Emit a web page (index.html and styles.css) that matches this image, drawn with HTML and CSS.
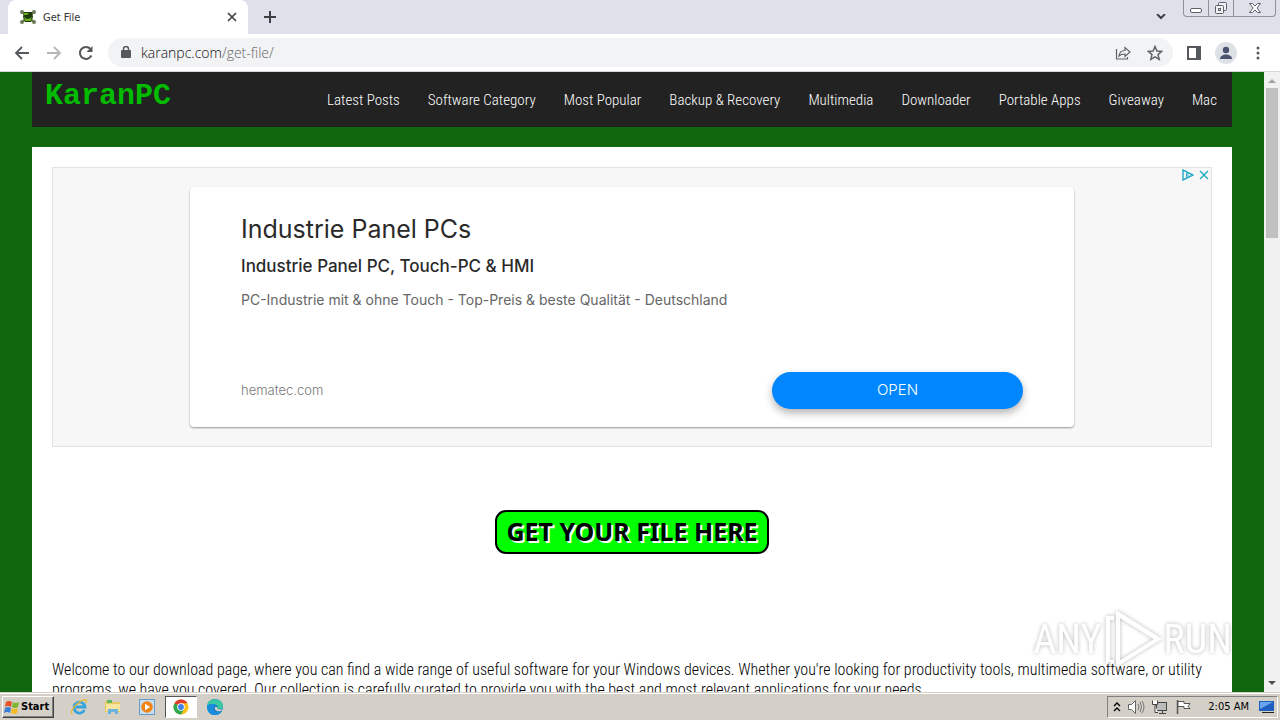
FILE: index.html
```html
<!DOCTYPE html>
<html lang="en">
<head>
    <meta charset="UTF-8">
    <meta name="viewport" content="width=device-width, initial-scale=1.0">
    <title>Get File</title>
    <link rel="stylesheet" href="styles.css">
</head>
<body>

<!-- Browser tabs -->
<div class="tab-strip">
    <div class="tab">
        <svg class="favicon" viewBox="0 0 16 16">
            <path d="M2 3l12 10M14 3L2 13" stroke="#6d8a4a" stroke-width="2.4"/>
            <g fill="#6d7a5a"><circle cx="2" cy="3" r="2"/><circle cx="14" cy="3" r="2"/><circle cx="2" cy="13" r="2"/><circle cx="14" cy="13" r="2"/></g>
            <path d="M4 3h8l1 5-2 5H5L3 8z" fill="#1d3a08"/>
            <path d="M4 4h5L7 6H4zM4 8l3 2 4-1 1-2-1 5H5z" fill="#6fae25"/>
        </svg>
        <span class="tab-title">Get File</span>
        <button class="icon-btn tab-close" aria-label="Close tab">
            <svg width="10" height="10" viewBox="0 0 10 10"><path d="M1 1l8 8M9 1L1 9" stroke="#3c4043" stroke-width="1.7"/></svg>
        </button>
    </div>
    <button class="icon-btn new-tab" aria-label="New tab">
        <svg width="12" height="12" viewBox="0 0 12 12"><path d="M6 0v12M0 6h12" stroke="#3c4043" stroke-width="2"/></svg>
    </button>
    <button class="icon-btn tab-search" aria-label="Search tabs">
        <svg width="10" height="6" viewBox="0 0 10 6"><path d="M1 0l4 4 4-4" fill="none" stroke="#3c4043" stroke-width="2"/></svg>
    </button>
    <div class="window-buttons">
        <button aria-label="Minimize">
            <svg width="14" height="16" viewBox="0 0 14 16"><rect x="1.500" y="8.500" width="11" height="4" rx="1.500" fill="#fff" stroke="#5c6068"/></svg>
        </button>
        <button aria-label="Restore">
            <svg width="14" height="16" viewBox="0 0 14 16" fill="#eef0f3" stroke="#5c6068"><rect x="4.500" y="2.500" width="8" height="8" rx="1"/><rect x="1.500" y="5.500" width="8" height="8" rx="1"/><rect x="4.500" y="8.500" width="2" height="2"/></svg>
        </button>
        <button class="win-close" aria-label="Close">
            <svg width="14" height="16" viewBox="0 0 14 16"><path d="M1.500 3.500h3L7 6l2.500-2.500h3L9 8l3.500 4.500h-3L7 10l-2.500 2.500h-3L5 8z" fill="#fff" stroke="#5c6068"/></svg>
        </button>
    </div>
</div>

<!-- Address bar -->
<div class="toolbar">
    <button class="icon-btn" aria-label="Back">
        <svg width="16" height="16" viewBox="0 0 16 16"><path d="M15 8H2M8 2L2 8l6 6" fill="none" stroke="#55585c" stroke-width="1.8"/></svg>
    </button>
    <button class="icon-btn" aria-label="Forward">
        <svg width="16" height="16" viewBox="0 0 16 16"><path d="M1 8h13M8 2l6 6-6 6" fill="none" stroke="#b5b7ba" stroke-width="1.8"/></svg>
    </button>
    <button class="icon-btn" aria-label="Reload">
        <svg width="16" height="16" viewBox="0 0 16 16"><path d="M13.400 10.500A6 6 0 1 1 12.500 4" fill="none" stroke="#55585c" stroke-width="2"/><path d="M14.500 1v6h-6z" fill="#55585c"/></svg>
    </button>
    <div class="omnibox">
        <svg width="10" height="13" viewBox="0 0 10 13"><rect y="4" width="10" height="8" rx="1" fill="#55585c"/><path d="M2.500 5V3a2.500 2.500 0 0 1 5 0v2" fill="none" stroke="#55585c" stroke-width="1.500"/></svg>
        <div class="url">karanpc.com<span>/get-file/</span></div>
        <button class="icon-btn" aria-label="Share">
            <svg width="16" height="16" viewBox="0 0 16 16" fill="none" stroke="#5f6368" stroke-width="1.200"><path d="M1.500 4v10h11v-2"/><path d="M4 11c.5-4 3-5.500 6-5.500V2.500l5 4.500-5 4.500V9C7.500 9 5.500 9.500 4 11z"/></svg>
        </button>
        <button class="icon-btn" aria-label="Bookmark">
            <svg width="16" height="16" viewBox="0 0 16 16"><path d="M8 1.500l1.900 4.500 4.800.4-3.700 3.200 1.200 4.800L8 11.800l-4.200 2.600L5 9.600 1.300 6.400l4.800-.4z" fill="none" stroke="#5f6368" stroke-width="1.500"/></svg>
        </button>
    </div>
    <button class="icon-btn" aria-label="Side panel">
        <svg width="14" height="14" viewBox="0 0 14 14"><rect x="1" y="1" width="12" height="12" fill="#fff" stroke="#55585c" stroke-width="2"/><path d="M9 1h4v12H9z" fill="#55585c"/></svg>
    </button>
    <button class="icon-btn profile" aria-label="Profile">
        <svg width="22" height="22" viewBox="0 0 22 22"><circle cx="11" cy="11" r="11" fill="#dee1e6"/><circle cx="11" cy="8" r="3.200" fill="#4a5470"/><path d="M5 17c0-6 12-6 12 0z" fill="#4a5470"/></svg>
    </button>
    <button class="icon-btn" aria-label="Menu">
        <svg width="10" height="14" viewBox="0 0 10 14" fill="#55585c"><circle cx="5" cy="2" r="1.500"/><circle cx="5" cy="7" r="1.500"/><circle cx="5" cy="12" r="1.500"/></svg>
    </button>
</div>

<div class="viewport">
    <div class="page">
        <div class="site">
            <header class="site-header">
                <a class="logo" href="#">KaranPC</a>
                <nav>
                    <a href="#">Latest Posts</a>
                    <a href="#">Software Category</a>
                    <a href="#">Most Popular</a>
                    <a href="#">Backup &amp; Recovery</a>
                    <a href="#">Multimedia</a>
                    <a href="#">Downloader</a>
                    <a href="#">Portable Apps</a>
                    <a href="#">Giveaway</a>
                    <a href="#">Mac</a>
                </nav>
            </header>
            <main class="content">
                <div class="ad">
                    <div class="ad-choices">
                        <svg width="12" height="12" viewBox="0 0 12 12" fill="none" stroke="#1fa9c4"><path d="M1 1v10l10-5z" stroke-width="1.400"/><path d="M4.500 4v4l2-2z"/></svg>
                        <svg width="12" height="12" viewBox="0 0 12 12"><path d="M2 2l8 8M10 2l-8 8" stroke="#1fa9c4" stroke-width="1.400"/></svg>
                    </div>
                    <div class="ad-card">
                        <h2>Industrie Panel PCs</h2>
                        <h3>Industrie Panel PC, Touch-PC &amp; HMI</h3>
                        <p>PC-Industrie mit &amp; ohne Touch - Top-Preis &amp; beste Qualität - Deutschland</p>
                        <div class="ad-footer">
                            <span class="ad-domain">hematec.com</span>
                            <button class="ad-open">OPEN</button>
                        </div>
                    </div>
                </div>
                <button class="get-file">GET YOUR FILE HERE</button>
                <p class="intro">Welcome to our download page, where you can find a wide range of useful software for your Windows devices. Whether you're looking for productivity tools, multimedia software, or utility programs, we have you covered. Our collection is carefully curated to provide you with the best and most relevant applications for your needs.</p>
            </main>
        </div>
    </div>
    <div class="scrollbar">
        <span class="arrow up"></span>
        <div class="thumb"></div>
        <span class="arrow down"></span>
    </div>
    <div class="watermark">
        <span>ANY</span>
        <svg width="58" height="60" viewBox="0 0 58 60" fill="none" stroke="#fff" stroke-width="4"><path d="M10 8H4v44h6"/><path d="M14 4v50l40-25z"/><path d="M14 4l40 25" stroke-width="5"/></svg>
        <span>RUN</span>
    </div>
</div>

<!-- Windows taskbar -->
<div class="taskbar">
    <button class="start">
        <svg width="16" height="16" viewBox="0 0 16 16"><path d="M2 3q3-2 6 0L7 8Q4 6 1 8z" fill="#e8502a"/><path d="M9 3q3 2 6 0l-1 5q-3 2-6 0z" fill="#7cb82f"/><path d="M1 9q3-2 6 0l-1 5q-3-2-6 0z" fill="#3a7fd5"/><path d="M8 9q3 2 6 0l-1 5q-3 2-6 0z" fill="#f5b921"/></svg>
        Start
    </button>
    <div class="quick-launch">
        <button aria-label="Internet Explorer">
            <svg width="18" height="18" viewBox="0 0 18 18" fill="none"><path d="M14.500 12A5.500 5.500 0 1 1 15 9H5" stroke="#36a3dc" stroke-width="2.800"/><path d="M2 16C-1 12 12 0 16 2c1 .6.500 2-.3 3" stroke="#e3b93b" stroke-width="1.400"/></svg>
        </button>
        <button aria-label="Explorer">
            <svg width="18" height="18" viewBox="0 0 18 18"><path d="M1 3h6l1 1h8v10H1z" fill="#e9c963"/><path d="M3 2h5v3H3z" fill="#5cb85c"/><path d="M2 6h14v7H2z" fill="#f7e49d"/><path d="M4 16v-5h10v5h-3v-2H7v2z" fill="#6cb4dc"/></svg>
        </button>
        <button aria-label="Media Player">
            <svg width="18" height="18" viewBox="0 0 18 18"><rect x="1.500" y="1.500" width="15" height="15" fill="#c9def0" stroke="#659ac9"/><circle cx="9" cy="9" r="5.800" fill="#f28416"/><path d="M7 5.800v6.400L12 9z" fill="#fff"/></svg>
        </button>
        <button class="active" aria-label="Chrome">
            <svg width="16" height="16" viewBox="0 0 16 16"><circle cx="8" cy="8" r="7.500" fill="#fbc116"/><path d="M8 8L1.500 4.250A7.500 7.500 0 0 1 14.500 4.250H8z" fill="#e33b2e"/><path d="M1.500 4.250A7.500 7.500 0 0 0 8 15.500l3.200-5.600L8 8z" fill="#2da94f"/><circle cx="8" cy="8" r="3.800" fill="#fff"/><circle cx="8" cy="8" r="2.900" fill="#3f7fe8"/></svg>
        </button>
        <button aria-label="Edge">
            <svg width="18" height="18" viewBox="0 0 18 18"><circle cx="9" cy="9" r="8" fill="#1477c9"/><path d="M1 8C2-1 16-1 17 8c0 3-3 4-6 3 2-3-1-5-4-5-3 0-5 1-6 2z" fill="#3cc8a0"/><path d="M1 8c2-3 8-3 9 0-4 0-4 5 1 6 2 .4 4-.5 5-1-3 5-8 4-9 4C3 16 1 13 1 8z" fill="#1b8edb"/><path d="M9 9c-1 3 2 5 6 4l2-2c-2 1-6 1-6-2z" fill="#d6d2c8"/></svg>
        </button>
    </div>
    <div class="tray">
        <svg width="8" height="12" viewBox="0 0 8 12" fill="none" stroke="#000" stroke-width="1.400"><path d="M1 5l3-3 3 3M1 10l3-3 3 3"/></svg>
        <svg width="18" height="16" viewBox="0 0 18 16"><path d="M1.500 5.500h3l4-4v13l-4-4h-3z" fill="#fff" stroke="#666"/><path d="M11 5q2 3 0 6M13 3q3 5 0 10M15 2q4 6 0 12" fill="none" stroke="#777"/></svg>
        <svg width="18" height="16" viewBox="0 0 18 16" stroke="#444"><rect x="5.500" y="3.500" width="10" height="8" fill="#bbb"/><path d="M8 14.500h7M11.500 12v2"/><path d="M1.500 1.500v4h5v-4M4 6v7.500h3" fill="#fff"/></svg>
        <svg width="18" height="16" viewBox="0 0 18 16"><path d="M2.500 1v14" stroke="#555" stroke-width="1.500"/><path d="M3 2.500h6v2h6l-2 3 2 2H9v-2H3z" fill="#fff" stroke="#555"/></svg>
        <time>2:05 AM</time>
        <svg width="16" height="16" viewBox="0 0 16 16"><path d="M0 2h15v10H0z" fill="#1e5fc0"/><path d="M1 3h13L1 10z" fill="#68a7ed"/><path d="M3 13h12v1H3z" fill="#222"/></svg>
    </div>
</div>

</body>
</html>
```
FILE: styles.css
```css
* {
    box-sizing: border-box;
}
body {
    margin: 0;
    height: 100vh;
    display: flex;
    flex-direction: column;
    overflow: hidden;
    font-family: "Roboto Condensed", "Liberation Sans Narrow", "Liberation Sans", sans-serif;
    font-size: 16px;
    font-weight: 300;
    color: #000;
}
button {
    padding: 0;
    font-family: inherit;
}
svg {
    display: block;
    flex-shrink: 0;
}
.icon-btn {
    display: flex;
    align-items: center;
    justify-content: center;
    border: none;
    background: none;
}

/* Tab strip */
.tab-strip {
    display: flex;
    align-items: center;
    flex: 0 0 34px;
    padding-left: 8px;
    background-color: #dee1e9;
}
.tab {
    display: flex;
    align-items: center;
    gap: 7px;
    align-self: stretch;
    width: 240px;
    padding: 0 11px 0 12px;
    border-radius: 8px 8px 0 0;
    background-color: #fff;
}
.favicon {
    width: 16px;
    height: 16px;
}
.tab-title {
    flex: 1;
    font: 11px "DejaVu Sans Condensed", "Noto Sans", sans-serif;
    color: #333;
}
.new-tab {
    margin-left: 16px;
}
.tab-search {
    margin-left: auto;
    margin-right: 17px;
}
.window-buttons {
    display: flex;
    align-self: flex-start;
    height: 17px;
    margin-right: 4px;
    border: 1px solid #8d929b;
    border-top: none;
    border-radius: 0 0 4px 4px;
}
.window-buttons button {
    display: flex;
    justify-content: center;
    width: 25px;
    border: none;
    border-right: 1px solid #8d929b;
    background: none;
}
.window-buttons .win-close {
    width: 41px;
    border-right: none;
}

/* Toolbar */
.toolbar {
    display: flex;
    align-items: center;
    gap: 16px;
    flex: 0 0 38px;
    padding: 0 17px 0 14px;
    border-bottom: 1px solid #d5d8dc;
    background-color: #fff;
}
.omnibox {
    display: flex;
    align-items: center;
    gap: 16px;
    flex: 1;
    height: 29px;
    margin: 0 -2px;
    padding: 0 10px 0 13px;
    border-radius: 15px;
    background-color: #f1f3f4;
}
.profile {
    margin-left: -2px;
}
.url {
    flex: 1;
    margin-left: -6px;
    font: 300 14px "Open Sans", sans-serif;
    color: #111;
}
.url span {
    color: #666;
}

/* Web page */
.viewport {
    position: relative;
    display: flex;
    flex: 1;
    min-height: 0;
    background-color: #10670e;
}
.page {
    flex: 1;
    overflow: hidden;
}
.site {
    max-width: 1200px;
    margin: 0 auto;
}
.site-header {
    display: flex;
    height: 55px;
    padding: 0 15px 0 13px;
    justify-content: space-between;
    background-color: #222;
}
.logo {
    margin-top: 7px;
    font: bold 30px/34px "Liberation Mono", monospace;
    color: #0b0;
    text-decoration: none;
}
nav {
    display: flex;
    align-items: center;
    gap: 28px;
    font-size: 15px;
}
nav a {
    color: #fff;
    text-decoration: none;
}
.content {
    margin-top: 20px;
    padding: 20px;
    background-color: #fff;
}
.ad {
    position: relative;
    height: 280px;
    padding: 19px;
    border: 1px solid #e2e2e2;
    background-color: #f7f7f7;
}
.ad-choices {
    position: absolute;
    top: 1px;
    right: 1px;
    display: flex;
    gap: 4px;
}
.ad-card {
    display: flex;
    flex-direction: column;
    max-width: 884px;
    height: 240px;
    margin: 0 auto;
    padding: 26px 51px 18px;
    border-radius: 4px;
    background-color: #fff;
    box-shadow: 0 1px 2px rgba(0,0,0,0.4);
    font-family: Inter, sans-serif;
}
.ad-card h2 {
    margin: 0;
    font-size: 25px;
    font-weight: 400;
    line-height: 32px;
    color: #2a2a2a;
}
.ad-card h3 {
    margin: 9px 0 10px;
    font-size: 17px;
    font-weight: 500;
    line-height: 24px;
    color: #2a2a2a;
}
.ad-card p {
    margin: 0;
    font-size: 14px;
    font-weight: 400;
    line-height: 24px;
    color: #666;
}
.ad-footer {
    display: flex;
    align-items: center;
    justify-content: space-between;
    margin-top: auto;
}
.ad-domain {
    padding-bottom: 2px;
    font-size: 13px;
    color: #777;
}
.ad-open {
    width: 251px;
    height: 37px;
    padding-bottom: 2px;
    border: none;
    border-radius: 19px;
    background-color: #0087ff;
    box-shadow: 0 4px 8px rgba(0,0,0,0.3);
    font-size: 15px;
    font-weight: 300;
    color: #fff;
}
.get-file {
    display: block;
    height: 44px;
    margin: 63px auto 106px;
    padding: 0 9px 3px;
    border: 2px solid #000;
    border-radius: 11px;
    background-color: #0f0;
    font: bold 25px "Noto Sans", sans-serif;
    color: #000;
    text-shadow: 2px 2px #fff;
}
.intro {
    margin: 0;
    line-height: 20px;
}

/* Scrollbar */
.scrollbar {
    display: flex;
    flex-direction: column;
    align-items: center;
    width: 16px;
    padding: 7px 0;
    background-color: #f1f1f1;
}
.arrow {
    border: 4px solid transparent;
}
.up {
    border-top: none;
    border-bottom-color: #a3a3a3;
}
.down {
    margin-top: auto;
    border-bottom: none;
    border-top-color: #505050;
}
.thumb {
    width: 12px;
    height: 150px;
    margin-top: 5px;
    background-color: #c1c1c1;
}

/* Watermark over the page */
.watermark {
    position: absolute;
    right: 48px;
    bottom: 22px;
    display: flex;
    align-items: center;
    gap: 2px;
    font-size: 40px;
    font-weight: 400;
    line-height: 60px;
    color: #fff;
    opacity: 0.7;
    filter: drop-shadow(0 0 2px rgba(0,0,0,0.4));
    pointer-events: none;
}

/* Taskbar */
.taskbar {
    display: flex;
    align-items: center;
    flex: 0 0 28px;
    padding: 2px;
    border-top: 1px solid #d4d0c8;
    box-shadow: inset 0 1px #fff;
    background-color: #d4d0c8;
    font-family: "DejaVu Sans Condensed", sans-serif;
}
.start {
    display: flex;
    align-items: center;
    gap: 1px;
    width: 52px;
    height: 22px;
    padding-left: 1px;
    border: 1px solid #404040;
    border-top-color: #fff;
    border-left-color: #fff;
    background-color: #d4d0c8;
    box-shadow: inset -1px -1px #808080;
    font-size: 11px;
    font-weight: bold;
}
.quick-launch {
    display: flex;
    gap: 2px;
    margin-left: 9px;
}
.quick-launch button {
    display: flex;
    align-items: center;
    justify-content: center;
    width: 32px;
    height: 22px;
    border: 1px solid transparent;
    background: none;
}
.quick-launch .active {
    border-color: #555 #fff #fff #555;
    background-color: #fff;
}
.tray {
    display: flex;
    align-items: center;
    gap: 6px;
    height: 22px;
    margin-left: auto;
    padding: 0 2px 0 5px;
    border: 1px solid;
    border-color: #808080 #fff #fff #808080;
}
time {
    margin: 0 4px 0 9px;
    font-size: 11px;
    font-weight: 400;
}
```
